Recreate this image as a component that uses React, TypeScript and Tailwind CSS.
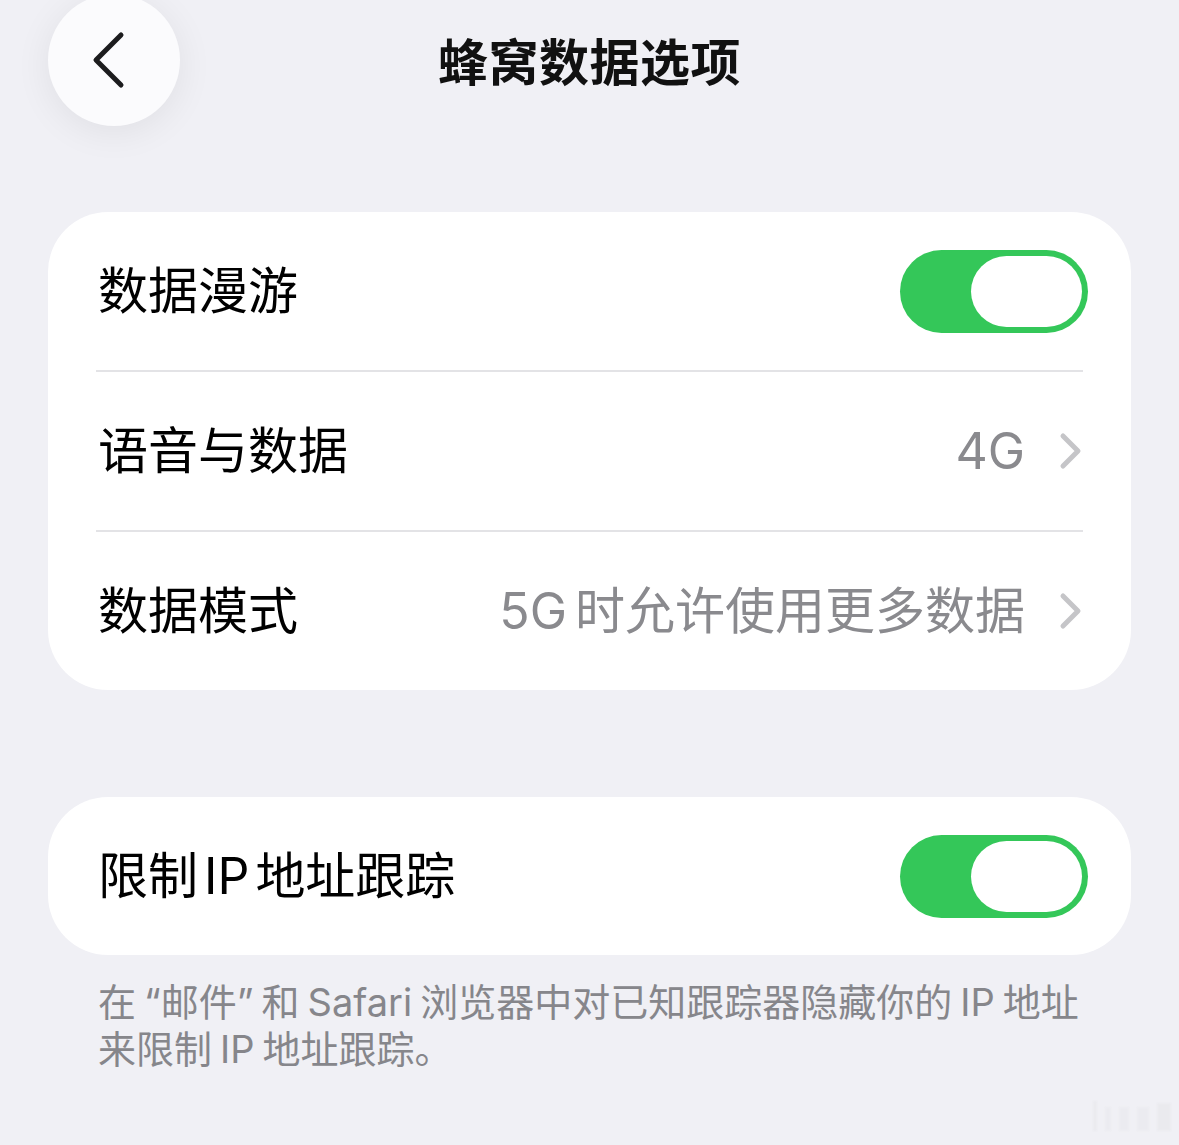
import React from "react";

const FONT = {
  fontFamily: '"Inter", "Noto Sans CJK SC", "Noto Sans", sans-serif',
};

function Toggle() {
  return (
    <div className="w-[188px] h-[83px] rounded-full bg-[#34c759] p-[6px] flex justify-end shrink-0">
      <div className="w-[111px] h-[71px] rounded-full bg-white" />
    </div>
  );
}

function Chevron() {
  return (
    <svg width="24" height="38" viewBox="0 0 24 38" className="shrink-0">
      <polyline
        points="4,4 19,19 4,34"
        fill="none"
        stroke="#c5c5c8"
        strokeWidth="5"
        strokeLinecap="round"
        strokeLinejoin="round"
      />
    </svg>
  );
}

// small gap between CJK and Latin, like iOS does
const Gap = () => <span className="inline-block w-[8px]" />;

function Row({
  label,
  value,
  toggle,
  divider,
}: {
  label: React.ReactNode;
  value?: React.ReactNode;
  toggle?: boolean;
  divider?: boolean;
}) {
  return (
    <div className="flex flex-col">
      <div className="h-[158px] flex items-center justify-between pl-[50px] pr-[43px]">
        <span className="text-[50px] leading-none text-black whitespace-nowrap">
          {label}
        </span>
        {toggle ? (
          <Toggle />
        ) : (
          <div className="flex items-center gap-[34px] pr-[5px]">
            <span className="text-[50px] leading-none text-[#8a8a8e] whitespace-nowrap">
              {value}
            </span>
            <Chevron />
          </div>
        )}
      </div>
      {divider && <div className="mx-[48px] h-[2px] bg-[#e3e3e6]" />}
    </div>
  );
}

export default function App() {
  return (
    <div
      className="relative w-full min-h-[1145px] bg-[#f0f0f5] overflow-hidden"
      style={FONT}
    >
      {/* header */}
      <div className="grid grid-cols-[1fr_auto_1fr] items-center h-[128px]">
        <div className="pl-[48px]">
          <div className="w-[132px] h-[132px] mt-[-8px] rounded-full bg-[#fbfbfd] shadow-[0_6px_36px_rgba(0,0,0,0.07)] flex items-center justify-center">
            <svg width="36" height="58" viewBox="0 0 36 58" className="mr-[8px]">
              <polyline
                points="29,4 4,29 29,54"
                fill="none"
                stroke="#1c1c1e"
                strokeWidth="5"
                strokeLinecap="round"
                strokeLinejoin="round"
              />
            </svg>
          </div>
        </div>
        <h1 className="text-[50px] font-bold leading-none text-[#111] tracking-[0.5px] whitespace-nowrap mt-[-2px]">
          蜂窝数据选项
        </h1>
        <div />
      </div>

      {/* card 1 */}
      <div className="mx-[48px] mt-[84px] rounded-[60px] bg-white flex flex-col">
        <Row label="数据漫游" toggle divider />
        <Row label="语音与数据" value="4G" divider />
        <Row
          label="数据模式"
          value={
            <>
              5G<span className="ml-[8px]">时允许使用更多数据</span>
            </>
          }
        />
      </div>

      {/* card 2 */}
      <div className="mx-[48px] mt-[107px] rounded-[60px] bg-white flex flex-col">
        <Row
          label={
            <>
              限制<span className="mx-[6px]">IP</span>地址跟踪
            </>
          }
          toggle
        />
      </div>

      <p className="mt-[24px] pl-[98px] text-[38px] leading-[47px] text-[#86868b] whitespace-nowrap">
        在<Gap />“邮件”<Gap />和<Gap />Safari<Gap />浏览器中对已知跟踪器隐藏你的
        <Gap />IP<Gap />地址
        <br />
        来限制<Gap />IP<Gap />地址跟踪。
      </p>

      {/* faint watermark */}
      <div className="absolute right-[8px] bottom-[14px] flex items-end gap-[8px] opacity-40 blur-[1px]">
        <div className="w-[4px] h-[30px] bg-[#e2e2e6]" />
        <div className="w-[6px] h-[24px] bg-[#e6e6ea]" />
        <div className="w-[10px] h-[24px] bg-[#e6e6ea]" />
        <div className="w-[12px] h-[24px] bg-[#e6e6ea]" />
        <div className="w-[14px] h-[28px] bg-[#e2e2e6]" />
      </div>
    </div>
  );
}
